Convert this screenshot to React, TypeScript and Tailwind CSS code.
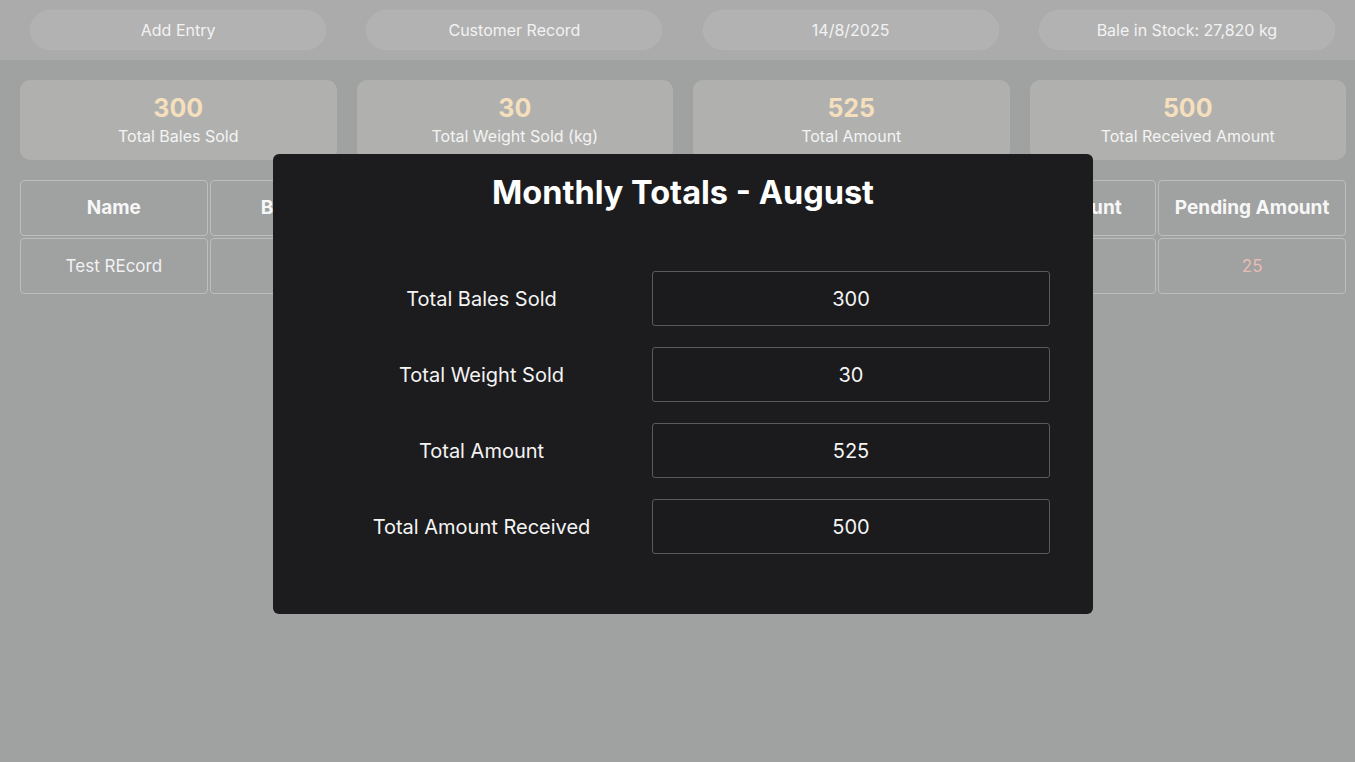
import React from "react";

const navItems = ["Add Entry", "Customer Record", "14/8/2025", "Bale in Stock: 27,820 kg"];

const stats = [
  { value: "300", label: "Total Bales Sold" },
  { value: "30", label: "Total Weight Sold (kg)" },
  { value: "525", label: "Total Amount" },
  { value: "500", label: "Total Received Amount" },
];

const columns = ["Name", "Bale Sold", "Weight", "Rate", "Amount", "Paid Amount", "Pending Amount"];
const row = ["Test REcord", "300", "30", "17.5", "525", "500", "25"];

const monthly = [
  { label: "Total Bales Sold", value: "300" },
  { label: "Total Weight Sold", value: "30" },
  { label: "Total Amount", value: "525" },
  { label: "Total Amount Received", value: "500" },
];

export default function App() {
  return (
    <div className="relative h-screen w-full overflow-hidden bg-[#a0a1a1] font-['Inter',sans-serif]">
      {/* top bar */}
      <div className="grid h-[60px] grid-cols-4 items-center bg-[#ababab] pl-[10px]">
        {navItems.map((item) => (
          <div key={item} className="flex justify-center">
            <div className="flex h-[40px] w-[296px] items-center justify-center rounded-full border border-[#b5b5b5] bg-[#b2b2b2] text-[16px] text-[#f2f2f2]">
              {item}
            </div>
          </div>
        ))}
      </div>

      {/* stats */}
      <div className="grid grid-cols-4 gap-[20px] pl-[20px] pr-[9px] pt-[20px]">
        {stats.map((s) => (
          <div
            key={s.label}
            className="flex h-[80px] flex-col items-center justify-center gap-[3px] rounded-[10px] bg-[#b0b1af] pb-[2px]"
          >
            <div className="text-[25px] font-bold leading-[30px] text-[#f5dfbd]">{s.value}</div>
            <div className="text-[16px] leading-[20px] text-[#f4f4f4]">{s.label}</div>
          </div>
        ))}
      </div>

      {/* table */}
      <div className="pl-[20px] pr-[9px] pt-[20px]">
        <div className="grid grid-cols-7 gap-[2px]">
          {columns.map((c) => (
            <div
              key={c}
              className="flex h-[56px] items-center justify-center rounded-[4px] border border-[#bdbdbd] pt-[1px] text-[19px] font-bold text-[#f7f7f7]"
            >
              {c}
            </div>
          ))}
          {row.map((v, i) => (
            <div
              key={i}
              className={`flex h-[56px] items-center justify-center rounded-[4px] border border-[#bdbdbd] pt-[1px] text-[17px] ${
                i === row.length - 1 ? "text-[#e9bcb6]" : "text-[#f2f2f2]"
              }`}
            >
              {v}
            </div>
          ))}
        </div>
      </div>

      {/* modal */}
      <div className="absolute left-[273px] top-[154px] h-[460px] w-[820px] rounded-[6px] bg-[#1c1c1e] pl-[40px] pt-[19px]">
        <h2 className="pr-[40px] text-center text-[32.5px] font-bold leading-[40px] text-white">
          Monthly Totals - August
        </h2>
        <div className="mt-[58px] flex flex-col gap-[21px]">
          {monthly.map((m) => (
            <div key={m.label} className="flex items-center">
              <div className="w-[337px] text-center text-[20px] text-[#f4f4f4]">{m.label}</div>
              <div className="ml-[2px] flex h-[55px] w-[398px] items-center justify-center rounded-[3px] border border-[#5a5a5c] bg-[#1b1b1d] text-[20px] text-[#f4f4f4]">
                {m.value}
              </div>
            </div>
          ))}
        </div>
      </div>
    </div>
  );
}
